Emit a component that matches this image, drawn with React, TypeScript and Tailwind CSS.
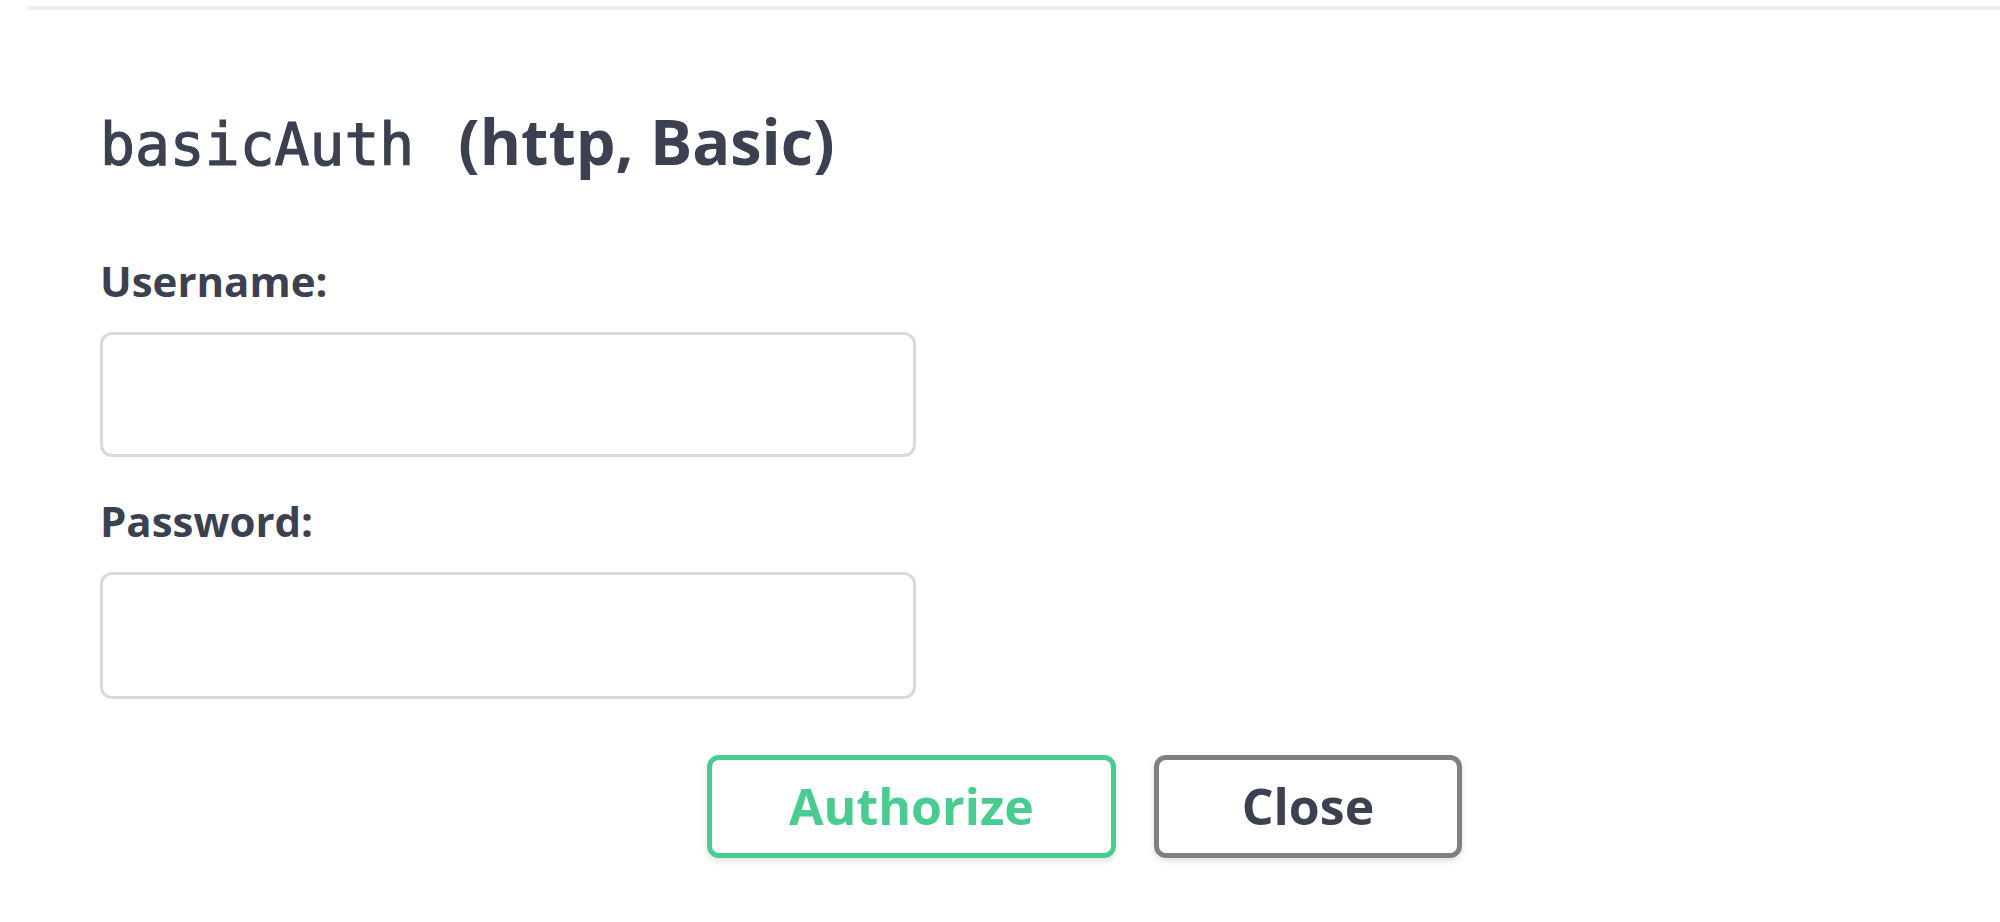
export default function App() {
  return (
    <div className="w-[2000px] h-[922px] overflow-hidden bg-white text-[#3b4151] font-['Open_Sans',sans-serif]">
      {/* modal body top rule */}
      <div className="ml-[28px] mt-[6px] w-[2100px] border-t-4 border-[#ededed]" />

      <div className="pl-[100px]">
        {/* scheme title */}
        <h4 className="mt-[96px] flex items-baseline leading-[70px]">
          <code className="font-['DejaVu_Sans_Mono',monospace] text-[58px] [-webkit-text-stroke:1.2px_#3b4151]">basicAuth</code>
          <span className="ml-[44px] text-[63px] font-bold">(http, Basic)</span>
        </h4>

        {/* username */}
        <div className="mt-[80px] flex flex-col">
          <label className="text-[42px] leading-[42px] font-bold">Username:</label>
          <input
            type="text"
            className="mt-[30px] w-[816px] h-[125px] rounded-[12px] border-[3px] border-[#dadada] bg-white px-[30px] text-[42px] outline-none"
          />
        </div>

        {/* password */}
        <div className="mt-[43px] flex flex-col">
          <label className="text-[42px] leading-[42px] font-bold">Password:</label>
          <input
            type="password"
            className="mt-[30px] w-[816px] h-[127px] rounded-[12px] border-[3px] border-[#dadada] bg-white px-[30px] text-[42px] outline-none"
          />
        </div>

        {/* actions */}
        <div className="mt-[56px] w-[1969px] flex justify-center gap-[38px]">
          <button className="w-[409px] h-[103px] rounded-[12px] border-[5px] border-[#49cc90] bg-white text-[50px] font-bold text-[#49cc90] shadow-[0_3px_6px_rgba(0,0,0,0.12)]">
            Authorize
          </button>
          <button className="w-[308px] h-[103px] rounded-[12px] border-[5px] border-[#808080] bg-white text-[50px] font-bold text-[#3b4151] shadow-[0_3px_6px_rgba(0,0,0,0.12)]">
            Close
          </button>
        </div>
      </div>
    </div>
  );
}
